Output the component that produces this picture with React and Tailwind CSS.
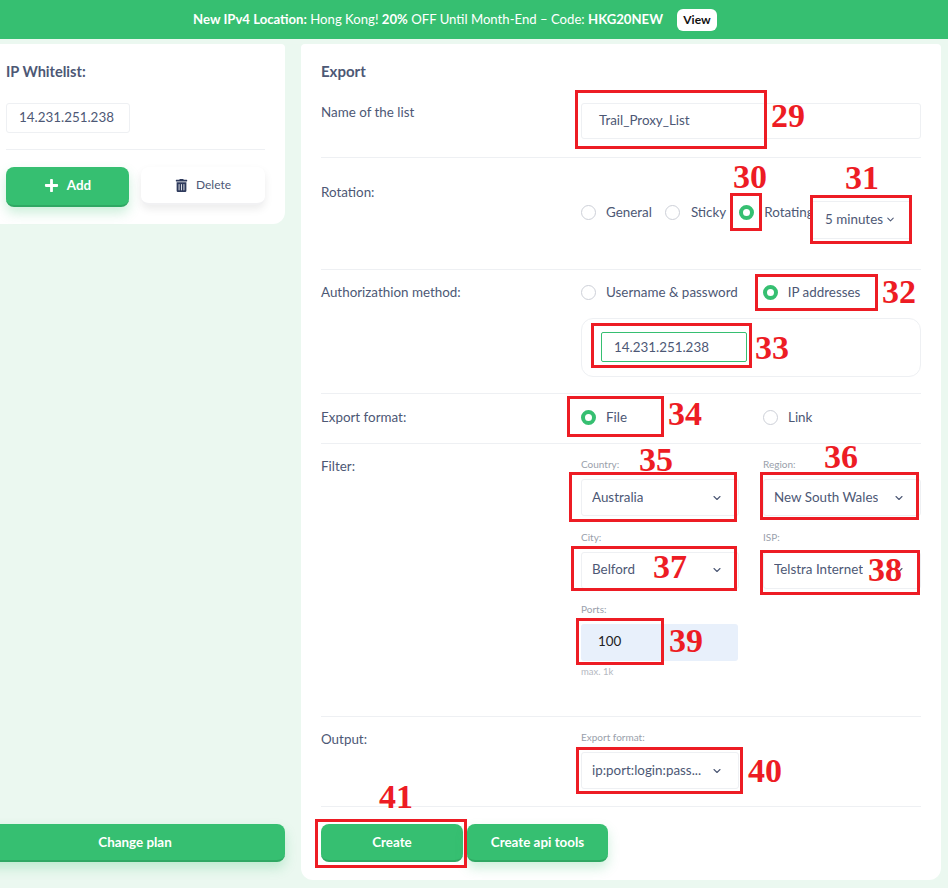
import { ChevronDown } from "lucide-react";
import { FaPlus, FaTrashAlt } from "react-icons/fa";

const marks = [
  { n: "29", box: "left-[575px] top-[90px] w-[192px] h-[59px]", num: "left-[771px] top-[96px]" },
  { n: "30", box: "left-[730px] top-[193px] w-[32px] h-[38px]", num: "left-[733px] top-[157px]" },
  { n: "31", box: "left-[810px] top-[195px] w-[102px] h-[49px]", num: "left-[845px] top-[158px]" },
  { n: "32", box: "left-[755px] top-[274px] w-[123px] h-[37px]", num: "left-[882px] top-[272px]" },
  { n: "33", box: "left-[591px] top-[323px] w-[161px] h-[45px]", num: "left-[755px] top-[328px]" },
  { n: "34", box: "left-[567px] top-[396px] w-[97px] h-[41px]", num: "left-[668px] top-[394px]" },
  { n: "35", box: "left-[569px] top-[472px] w-[168px] h-[50px]", num: "left-[639px] top-[440px]" },
  { n: "36", box: "left-[760px] top-[472px] w-[159px] h-[48px]", num: "left-[824px] top-[437px]" },
  { n: "37", box: "left-[571px] top-[546px] w-[166px] h-[45px]", num: "left-[653px] top-[547px]" },
  { n: "38", box: "left-[760px] top-[550px] w-[160px] h-[45px]", num: "left-[868px] top-[550px]" },
  { n: "39", box: "left-[576px] top-[618px] w-[88px] h-[47px]", num: "left-[669px] top-[621px]" },
  { n: "40", box: "left-[576px] top-[747px] w-[167px] h-[47px]", num: "left-[748px] top-[751px]" },
  { n: "41", box: "left-[315px] top-[819px] w-[152px] h-[49px]", num: "left-[379px] top-[777px]" },
];

const Radio = ({ label, active, className = "" }) => (
  <div className={`flex h-5 items-center gap-[10px] whitespace-nowrap ${className}`}>
    <span className={active ? "w-[15px] h-[15px] rounded-full border-[4px] border-[#36bf71] bg-white" : "w-[15px] h-[15px] rounded-full border border-[#cdd0d8] bg-white"} />
    <span>{label}</span>
  </div>
);

const Select = ({ label, value, className = "", boxClass = "" }) => (
  <div className={className}>
    <div className="text-[10px] leading-[14px] mb-2 text-[#9a9fab]">{label}</div>
    <div className={`h-[37px] flex items-center justify-between pl-[10px] pr-[15px] border border-[#eef0f3] rounded-[3px] bg-white ${boxClass}`}>
      <span className="truncate">{value}</span>
      <ChevronDown size={12} strokeWidth={2.2} className="shrink-0 ml-2" />
    </div>
  </div>
);

const Row = ({ label, className, labelClass = "", children }) => (
  <div className={`flex border-b border-[#eef0f3] ${className}`}>
    <div className={`w-[260px] shrink-0 leading-5 ${labelClass}`}>{label}</div>
    <div className="flex-1 min-w-0">{children}</div>
  </div>
);

export default function App() {
  return (
    <div className="relative w-[948px] h-[888px] overflow-hidden bg-[#ebf8f0] text-[13.4px] text-[#4d5875] font-['Lato','Noto_Sans',sans-serif]">
      {/* top banner */}
      <div className="h-[39px] bg-[#36bf71] flex items-center justify-center gap-[14px] pr-[38px] text-white text-[13.15px]">
        <div>
          <b>New IPv4 Location:</b> Hong Kong! <b>20%</b> OFF Until Month-End – Code: <b>HKG20NEW</b>
        </div>
        <div className="h-[22px] w-[40px] flex items-center justify-center rounded-md bg-white text-[#111] text-xs font-bold">View</div>
      </div>

      <div className="flex gap-4 pt-[5px] pr-[7px] h-[849px]">
        {/* left column */}
        <div className="w-[285px] shrink-0 flex flex-col justify-between">
          <div className="h-[180px] bg-white rounded-br-xl rounded-tr-sm pl-[6px] pr-5 pt-[18px]">
            <div className="text-[14.6px] font-bold leading-[20px]">IP Whitelist:</div>
            <div className="mt-[21px] w-[124px] h-[30px] pb-px border border-[#eef0f3] rounded-[3px] flex items-center pl-3">14.231.251.238</div>
            <div className="mt-4 border-t border-[#eef0f3]" />
            <div className="mt-[17px] flex gap-3">
              <button className="w-[123px] h-[40px] pb-px flex items-center justify-center gap-2 rounded-lg bg-[#36bf71] border-b-2 border-[#2fa863] text-white font-bold shadow-[0_6px_12px_rgba(54,191,113,0.25)]">
                <FaPlus size={15} /> Add
              </button>
              <button className="w-[124px] h-[38px] flex items-center justify-center gap-2 rounded-lg bg-white text-xs border-b-2 border-[#f1f1f3] shadow-[0_4px_8px_rgba(0,0,0,0.08)]">
                <FaTrashAlt size={13} className="text-[#2e3a5c]" /> Delete
              </button>
            </div>
          </div>
          <button className="h-[38px] -ml-[15px] pt-px rounded-r-lg bg-[#36bf71] border-b-2 border-[#2fa863] text-white font-bold shadow-[0_6px_12px_rgba(54,191,113,0.25)] mb-[26px]">Change plan</button>
        </div>

        {/* export panel */}
        <div className="flex-1 min-w-0 h-[836px] bg-white rounded-b-xl rounded-t-sm px-5 pt-[17px]">
          <div className="text-[15px] font-bold leading-5 mb-[22px]">Export</div>

          <Row label="Name of the list" labelClass="-mt-px" className="pb-[18px]">
            <div className="h-[36px] pb-[2px] flex items-center pl-[17px] border border-[#eef0f3] rounded-[3px]">Trail_Proxy_List</div>
          </Row>

          <Row label="Rotation:" className="h-[112px] pt-6">
            <div className="relative flex items-start pt-[20px] h-full">
              <Radio label="General" />
              <Radio label={<span className="ml-px">Sticky</span>} className="ml-[13px]" />
              <Radio label="Rotating" className="ml-[13px]" active />
              {/* select sits over the end of the label */}
              <div className="absolute left-[232px] top-[19px] w-[96px] h-[38px] pb-[2px] flex items-center pl-3 gap-[2px] bg-white border-y border-[#eef0f3]">
                5 minutes <ChevronDown size={11} strokeWidth={2.2} />
              </div>
            </div>
          </Row>

          <Row label="Authorizathion method:" className="h-[124px] pt-3">
            <div className="flex">
              <Radio label="Username & password" />
              <Radio label="IP addresses" className="ml-[25px]" active />
            </div>
            <div className="mt-4 h-[59px] border border-[#eef0f3] rounded-xl pl-[19px] pt-[13px]">
              <div className="w-[146px] h-[30px] flex items-center pl-3 pt-px border border-[#36bf71] rounded-[2px]">14.231.251.238</div>
            </div>
          </Row>

          <Row label="Export format:" className="h-[50px] pt-[13px]">
            <div className="flex">
              <Radio label="File" className="w-[182px]" active />
              <Radio label="Link" />
            </div>
          </Row>

          <Row label="Filter:" className="h-[273px] pt-[13px]" labelClass="-mt-px">
            <div className="grid grid-cols-[158px_158px] gap-x-[24px] gap-y-[14px]">
              <Select label="Country:" value="Australia" />
              <Select label="Region:" value="New South Wales" />
              <Select label="City:" value="Belford" boxClass="pb-[2px]" />
              <Select label="ISP:" value="Telstra Internet" boxClass="pb-[2px]" />
              <div className="col-span-2 -mt-[1px]">
                <div className="text-[10px] leading-[14px] mb-2 text-[#9a9fab]">Ports:</div>
                <div className="w-[157px] h-[37px] pb-[2px] flex items-center pl-[17px] bg-[#e8f0fb] rounded-[3px] text-[#222]">100</div>
                <div className="mt-[4px] text-[9.5px] leading-[14px] text-[#b4b8c1]">max. 1k</div>
              </div>
            </div>
          </Row>

          <Row label="Output:" className="h-[90px] pt-3">
            <Select label="Export format:" value="ip:port:login:pass..." className="w-[158px] mt-px" />
          </Row>

          <div className="flex gap-[4px] mt-[17px]">
            <button className="w-[142px] h-[38px] pt-px rounded-lg bg-[#36bf71] border-b-2 border-[#2fa863] text-white font-bold">Create</button>
            <button className="w-[141px] h-[38px] pt-px rounded-lg bg-[#36bf71] border-b-2 border-[#2fa863] text-white font-bold shadow-[0_6px_12px_rgba(54,191,113,0.25)]">Create api tools</button>
          </div>
        </div>
      </div>

      {/* red annotations on top of the screenshot */}
      {marks.map((m) => (
        <div key={m.n}>
          <div className={`absolute border-[3px] border-[#ed1c24] ${m.box}`} />
          <div className={`absolute text-[34px] leading-[40px] font-bold text-[#ed1c24] font-['Liberation_Serif',serif] ${m.num}`}>{m.n}</div>
        </div>
      ))}
    </div>
  );
}
